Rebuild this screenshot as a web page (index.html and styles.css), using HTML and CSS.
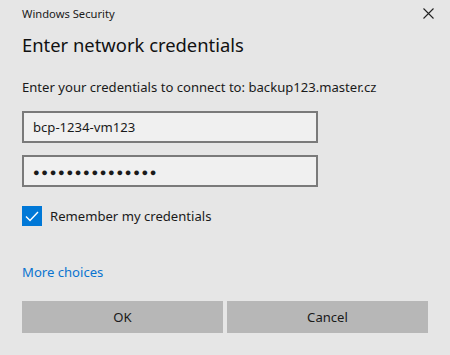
FILE: index.html
```html
<!DOCTYPE html>
<html>
<head>
<meta charset="utf-8">
<link rel="stylesheet" href="styles.css">
</head>
<body>
<div class="dialog">
  <div class="titlebar">
    <span class="app">Windows Security</span>
    <svg class="close" width="11" height="11" viewBox="0 0 11 11"><path d="M0.5 0.5 L10.5 10.5 M10.5 0.5 L0.5 10.5" stroke="#222" stroke-width="1.1" fill="none"/></svg>
  </div>
  <div class="heading">Enter network credentials</div>
  <div class="message">Enter your credentials to connect to: backup123.master.cz</div>
  <div class="field first"><span class="value">bcp-1234-vm123</span></div>
  <div class="field"><span class="dots">●●●●●●●●●●●●●●●</span></div>
  <label class="check">
    <span class="box"><svg width="20" height="20" viewBox="0 0 20 20"><path d="M4 10.5 L8 14.5 L16 6" stroke="#fff" stroke-width="1.4" fill="none"/></svg></span>
    <span>Remember my credentials</span>
  </label>
  <div class="more">More choices</div>
  <div class="buttons">
    <div class="btn">OK</div>
    <div class="btn">Cancel</div>
  </div>
</div>
</body>
</html>
```
FILE: styles.css
```css
html, body {
  margin: 0;
  padding: 0;
  background: #e6e6e6;
}
body {
  width: 450px;
  height: 355px;
  overflow: hidden;
  font-family: "Noto Sans", "Open Sans", sans-serif;
  color: #1a1a1a;
}
.dialog {
  padding: 0 22px;
}
.titlebar {
  display: flex;
  justify-content: space-between;
  align-items: center;
  height: 26px;
  font-size: 11.2px;
}
.close {
  margin-right: -6px;
}
.heading {
  font-size: 18.4px;
  margin-top: 5px;
  line-height: 28px;
  color: #111;
}
.message {
  font-size: 13.1px;
  margin-top: 18px;
  line-height: 20px;
}
.field {
  box-sizing: border-box;
  width: 296px;
  height: 32px;
  border: 2px solid #7a7a7a;
  background: #f0f0f0;
  margin-top: 12px;
  display: flex;
  align-items: center;
  padding-left: 9px;
  font-size: 13.1px;
}
.field.first {
  margin-top: 14px;
}
.dots {
  font-size: 11px;
  letter-spacing: 1.7px;
}
.check {
  display: flex;
  align-items: center;
  gap: 8px;
  margin-top: 19px;
  font-size: 13.1px;
}
.box {
  width: 20px;
  height: 20px;
  background: #0078d7;
  display: block;
}
.box svg { display: block; }
.more {
  color: #0a74d0;
  font-size: 13.1px;
  margin-top: 36px;
  line-height: 20px;
}
.buttons {
  display: flex;
  gap: 4px;
  margin-top: 19px;
}
.btn {
  width: 201px;
  height: 32px;
  background: #b7b7b7;
  display: flex;
  align-items: center;
  justify-content: center;
  font-size: 13.1px;
}
```
